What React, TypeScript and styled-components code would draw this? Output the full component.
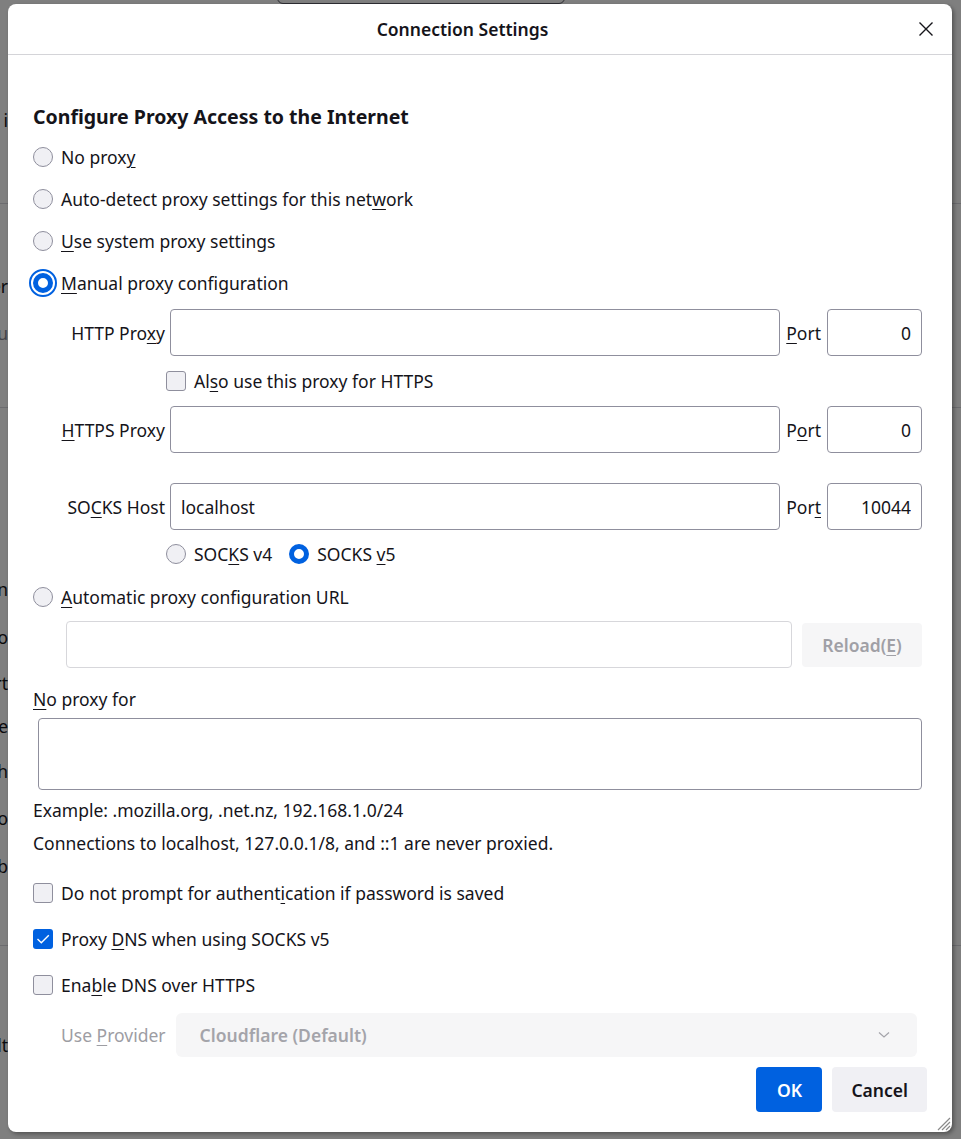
import React from 'react'
import styled, { createGlobalStyle } from 'styled-components'

const GlobalStyle = createGlobalStyle`
  html, body {
    margin: 0;
    padding: 0;
  }
  body {
    width: 961px;
    height: 1139px;
    overflow: hidden;
    font-family: "Noto Sans", "Open Sans", sans-serif;
    color: #15141a;
  }
`

// the settings page that sits behind the modal
const behindRows = [
  { text: 'Tabs i', top: 104 },
  { divider: true, top: 71 },
  { text: 'Browser', top: 70 },
  { text: 'Menu', top: 23, muted: true },
  { divider: true, top: 62 },
  { text: 'Open', top: 169 },
  { text: 'Go to', top: 24 },
  { text: 'Import', top: 22 },
  { text: 'Size', top: 19 },
  { text: 'Search', top: 21 },
  { text: 'Also', top: 23 },
  { text: 'Tab', top: 24 },
  { divider: true, top: 67 },
  { text: 'Default', top: 87 },
]

const Screen = styled.div`
  position: relative;
  width: 961px;
  height: 1139px;
  overflow: hidden;
  background: #ffffff;
`

const BehindPage = styled.div`
  display: flex;
  flex-direction: column;
  font-size: 17.5px;
`

const BehindSearch = styled.div`
  margin: -36px 0 0 277px;
  width: 288px;
  height: 40px;
  box-sizing: border-box;
  border: 1px solid #5b5b66;
  border-radius: 6px;
`

const BehindLine = styled.div<{ $top: number; $muted?: boolean }>`
  margin-top: ${p => p.$top}px;
  width: 8px;
  height: 24px;
  line-height: 24px;
  display: flex;
  justify-content: flex-end;
  white-space: nowrap;
  color: ${p => (p.$muted ? '#8a8a94' : '#15141a')};
`

const BehindDivider = styled.div<{ $top: number }>`
  margin-top: ${p => p.$top}px;
  height: 1px;
  width: 100%;
  background: #d9d9de;
`

const Backdrop = styled.div`
  position: absolute;
  inset: 0;
  background: rgba(0, 0, 0, 0.5);
`

const Dialog = styled.div`
  position: absolute;
  left: 8px;
  top: 4px;
  width: 944px;
  height: 1128px;
  background: #ffffff;
  border-radius: 8px;
  box-shadow: 2px 2px 4px rgba(0, 0, 0, 0.35);
  display: flex;
  flex-direction: column;
  font-size: 17.5px;
`

const Header = styled.div`
  height: 50px;
  flex: none;
  display: flex;
  align-items: center;
  border-bottom: 1px solid #d4d4d8;
`

const Title = styled.div`
  flex: 1;
  text-align: center;
  font-size: 17.5px;
  font-weight: 600;
`

const CloseButton = styled.button`
  margin-right: 17px;
  width: 18px;
  height: 32px;
  border: none;
  background: transparent;
  padding: 0;
  display: flex;
  align-items: center;
  justify-content: center;
`

const Body = styled.div`
  padding: 48px 30px 0 25px;
  display: flex;
  flex-direction: column;
`

const Heading = styled.h2`
  margin: 0 0 5px;
  font-size: 19.5px;
  font-weight: 700;
  line-height: 28px;
`

const OptionRow = styled.label<{ $height?: number }>`
  display: flex;
  align-items: center;
  gap: 8px;
  height: ${p => p.$height ?? 42}px;
  line-height: 24px;
`

const RadioDot = styled.span<{ $checked?: boolean; $focused?: boolean }>`
  flex: none;
  box-sizing: border-box;
  width: 20px;
  height: 20px;
  border-radius: 50%;
  border: ${p => (p.$checked ? '5px solid #0061e0' : '1px solid #8f8f9d')};
  background: ${p => (p.$checked ? '#ffffff' : '#f0f0f4')};
  outline: ${p => (p.$focused ? '2px solid #0061e0' : 'none')};
  outline-offset: 2px;
`

const CheckBox = styled.span<{ $checked?: boolean }>`
  flex: none;
  box-sizing: border-box;
  width: 20px;
  height: 20px;
  border-radius: 3px;
  border: ${p => (p.$checked ? 'none' : '1px solid #8f8f9d')};
  background: ${p => (p.$checked ? '#0061e0' : '#f0f0f4')};
  display: flex;
  align-items: center;
  justify-content: center;
`

const Key = styled.u`
  text-decoration-thickness: 1px;
  text-underline-offset: 3px;
`

const FieldRow = styled.div<{ $top?: number }>`
  display: grid;
  grid-template-columns: 104px 1fr auto 95px;
  column-gap: 5px;
  align-items: center;
  margin: ${p => p.$top ?? 0}px 0 0 28px;
`

const FieldLabel = styled.label`
  text-align: right;
  white-space: nowrap;
`

const PortLabel = styled.label`
  padding: 0 1px;
`

const TextInput = styled.input<{ $align?: 'left' | 'right' }>`
  box-sizing: border-box;
  height: 47px;
  width: 100%;
  border: 1px solid #8f8f9d;
  border-radius: 4px;
  padding: 0 10px;
  font: inherit;
  color: #15141a;
  background: #ffffff;
  text-align: ${p => p.$align ?? 'left'};
  outline: none;
`

const SubRow = styled.div<{ $height: number; $gap?: number }>`
  display: flex;
  align-items: center;
  height: ${p => p.$height}px;
  margin-left: 133px;
  gap: ${p => p.$gap ?? 0}px;
`

const UrlRow = styled.div`
  display: flex;
  align-items: center;
  gap: 10px;
  margin: 5px 0 0 33px;
`

const DisabledInput = styled(TextInput)`
  flex: 1;
  border-color: #d7d7db;
`

const ReloadButton = styled.button`
  flex: none;
  width: 120px;
  height: 44px;
  border: none;
  border-radius: 4px;
  background: #f6f6f7;
  color: #a0a0a6;
  font: inherit;
  font-weight: 600;
`

const PlainLabel = styled.div<{ $top: number }>`
  margin-top: ${p => p.$top}px;
  line-height: 24px;
`

const TextArea = styled.textarea`
  box-sizing: border-box;
  margin: 7px 0 0 5px;
  height: 72px;
  border: 1px solid #8f8f9d;
  border-radius: 4px;
  resize: none;
  font: inherit;
  outline: none;
`

const CheckList = styled.div`
  margin-top: 15px;
  display: flex;
  flex-direction: column;
`

const ProviderRow = styled.div`
  display: flex;
  align-items: center;
  gap: 10px;
  margin: 5px 5px 0 28px;
  color: #9d9da3;
`

const SelectBox = styled.div`
  flex: 1;
  height: 44px;
  box-sizing: border-box;
  border-radius: 6px;
  background: #f6f6f7;
  padding: 0 27px 0 24px;
  display: flex;
  align-items: center;
  justify-content: space-between;
  font-weight: 600;
  color: #a4a4aa;
`

const Footer = styled.div`
  margin-top: auto;
  display: flex;
  justify-content: flex-end;
  gap: 10px;
  padding: 0 25px 20px;
`

const DialogButton = styled.button<{ $primary?: boolean }>`
  height: 45px;
  min-width: 66px;
  padding: 0 19px;
  border: none;
  border-radius: 4px;
  font: inherit;
  font-weight: 600;
  background: ${p => (p.$primary ? '#0061e0' : '#f0f0f4')};
  color: ${p => (p.$primary ? '#ffffff' : '#15141a')};
`

const Grip = styled.svg`
  position: absolute;
  right: 1px;
  bottom: 1px;
`

const Check = () => (
  <svg width="16" height="16" viewBox="0 0 16 16">
    <path d="M2.5 8 L6.3 11.8 L13.8 4.2" fill="none" stroke="#fff" strokeWidth="1.4" />
  </svg>
)

export default function App() {
  return (
    <Screen>
      <GlobalStyle />
      <BehindPage>
        <BehindSearch />
        {behindRows.map((row, i) =>
          row.divider ? (
            <BehindDivider key={i} $top={row.top} />
          ) : (
            <BehindLine key={i} $top={row.top} $muted={row.muted}>
              <span>{row.text}</span>
            </BehindLine>
          )
        )}
      </BehindPage>
      <Backdrop />

      <Dialog>
        <Header>
          <Title>Connection Settings</Title>
          <CloseButton aria-label="Close">
            <svg width="16" height="16" viewBox="0 0 16 16">
              <path d="M1.5 1.5 L14.5 14.5 M14.5 1.5 L1.5 14.5" stroke="#15141a" strokeWidth="1.4" />
            </svg>
          </CloseButton>
        </Header>

        <Body>
          <Heading>Configure Proxy Access to the Internet</Heading>
          <OptionRow>
            <RadioDot />
            <span>No prox<Key>y</Key></span>
          </OptionRow>
          <OptionRow>
            <RadioDot />
            <span>Auto-detect proxy settings for this net<Key>w</Key>ork</span>
          </OptionRow>
          <OptionRow>
            <RadioDot />
            <span><Key>U</Key>se system proxy settings</span>
          </OptionRow>
          <OptionRow>
            <RadioDot $checked $focused />
            <span><Key>M</Key>anual proxy configuration</span>
          </OptionRow>

          <FieldRow $top={5}>
            <FieldLabel>HTTP Pro<Key>x</Key>y</FieldLabel>
            <TextInput defaultValue="" />
            <PortLabel><Key>P</Key>ort</PortLabel>
            <TextInput defaultValue="0" $align="right" />
          </FieldRow>
          <SubRow $height={50} $gap={8}>
            <CheckBox />
            <span>Al<Key>s</Key>o use this proxy for HTTPS</span>
          </SubRow>
          <FieldRow>
            <FieldLabel><Key>H</Key>TTPS Proxy</FieldLabel>
            <TextInput defaultValue="" />
            <PortLabel>P<Key>o</Key>rt</PortLabel>
            <TextInput defaultValue="0" $align="right" />
          </FieldRow>
          <FieldRow $top={30}>
            <FieldLabel>SO<Key>C</Key>KS Host</FieldLabel>
            <TextInput defaultValue="localhost" />
            <PortLabel>Por<Key>t</Key></PortLabel>
            <TextInput defaultValue="10044" $align="right" />
          </FieldRow>
          <SubRow $height={47}>
            <OptionRow $height={47}>
              <RadioDot />
              <span>SOC<Key>K</Key>S v4</span>
            </OptionRow>
            <OptionRow $height={47} style={{ marginLeft: 17 }}>
              <RadioDot $checked />
              <span>SOCKS <Key>v</Key>5</span>
            </OptionRow>
          </SubRow>

          <OptionRow $height={39}>
            <RadioDot />
            <span><Key>A</Key>utomatic proxy configuration URL</span>
          </OptionRow>
          <UrlRow>
            <DisabledInput disabled defaultValue="" />
            <ReloadButton disabled>Reload(<Key>E</Key>)</ReloadButton>
          </UrlRow>

          <PlainLabel $top={19}><Key>N</Key>o proxy for</PlainLabel>
          <TextArea />
          <PlainLabel $top={8}>Example: .mozilla.org, .net.nz, 192.168.1.0/24</PlainLabel>
          <PlainLabel $top={9}>Connections to localhost, 127.0.0.1/8, and ::1 are never proxied.</PlainLabel>

          <CheckList>
            <OptionRow $height={46}>
              <CheckBox />
              <span>Do not prompt for authent<Key>i</Key>cation if password is saved</span>
            </OptionRow>
            <OptionRow $height={46}>
              <CheckBox $checked><Check /></CheckBox>
              <span>Proxy <Key>D</Key>NS when using SOCKS v5</span>
            </OptionRow>
            <OptionRow $height={46}>
              <CheckBox />
              <span>Ena<Key>b</Key>le DNS over HTTPS</span>
            </OptionRow>
          </CheckList>

          <ProviderRow>
            <span>Use <Key>P</Key>rovider</span>
            <SelectBox>
              <span>Cloudflare (Default)</span>
              <svg width="12" height="8" viewBox="0 0 12 8">
                <path d="M1 1.5 L6 6 L11 1.5" fill="none" stroke="#a4a4aa" strokeWidth="1.2" />
              </svg>
            </SelectBox>
          </ProviderRow>
        </Body>

        <Footer>
          <DialogButton $primary>OK</DialogButton>
          <DialogButton>Cancel</DialogButton>
        </Footer>

        <Grip width="18" height="18" viewBox="0 0 18 18">
          <path d="M17 5 L5 17 M17 9 L9 17 M17 13 L13 17" stroke="#8a8a8a" strokeWidth="1.2" />
        </Grip>
      </Dialog>
    </Screen>
  )
}
